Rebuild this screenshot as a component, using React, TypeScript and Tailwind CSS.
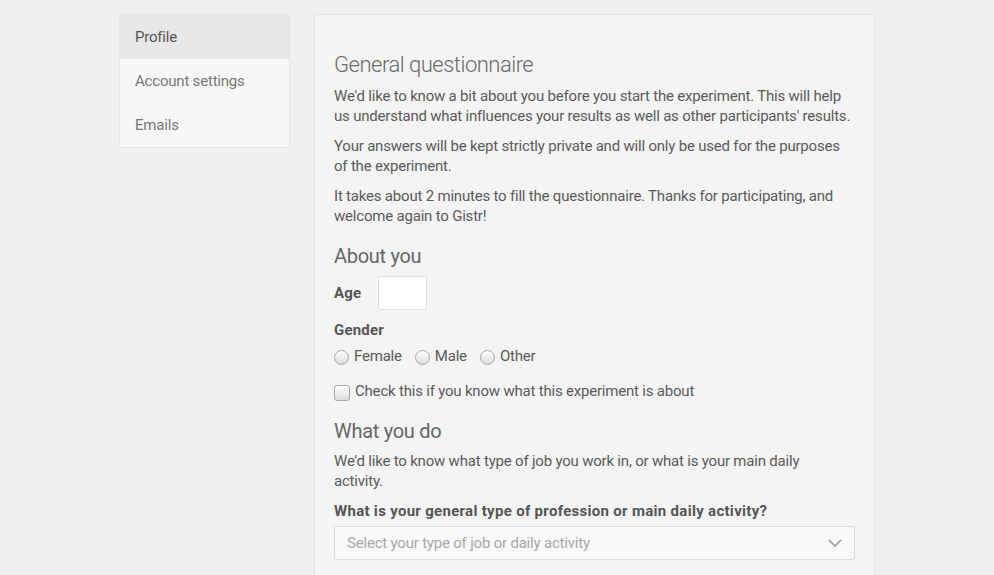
import React, { useState } from 'react';

const Radio = ({ label, checked, onClick }: { label: string; checked: boolean; onClick: () => void }) => (
  <label onClick={onClick} className="flex items-center gap-[5px] cursor-pointer">
    <span className="w-[15px] h-[15px] mt-[3px] rounded-full border border-[#a9a9a9] bg-gradient-to-b from-white to-[#dcdcdc] flex items-center justify-center">
      {checked && <span className="w-[7px] h-[7px] rounded-full bg-[#444]" />}
    </span>
    <span>{label}</span>
  </label>
);

export default function App() {
  const [gender, setGender] = useState('');
  const [knows, setKnows] = useState(false);
  const [age, setAge] = useState('');

  return (
    <div className="min-h-screen bg-[#eff0f2] font-['Roboto',sans-serif] text-[15px] leading-[20px] tracking-[-0.2px] text-[#5b5b5b]">
      <div className="w-[756px] mx-auto pt-[14px] flex items-start gap-[24px]">
        {/* Sidebar */}
        <nav className="w-[171px] shrink-0 bg-[#f7f7f7] border border-[#e4e4e4] rounded-[2px] flex flex-col">
          <a className="h-[44px] px-[15px] flex items-center bg-[#e7e7e7] text-[#555]">Profile</a>
          <a className="h-[44px] px-[15px] flex items-center text-[#777]">Account settings</a>
          <a className="h-[44px] px-[15px] flex items-center text-[#777]">Emails</a>
        </nav>

        {/* Main panel */}
        <main className="w-[561px] bg-[#f4f4f4] border border-[#e4e4e4] rounded-[2px] px-[19px] pt-[37px] pb-[40px]">
          <h1 className="text-[22px] leading-[26px] font-light tracking-[-0.5px] text-[#6a6a6a]">General questionnaire</h1>
          <p className="mt-[8px]">We'd like to know a bit about you before you start the experiment. This will help us understand what influences your results as well as other participants' results.</p>
          <p className="mt-[10px]">Your answers will be kept strictly private and will only be used for the purposes of the experiment.</p>
          <p className="mt-[10px]">It takes about 2 minutes to fill the questionnaire. Thanks for participating, and welcome again to Gistr!</p>

          <h2 className="mt-[17px] text-[20px] leading-[26px] tracking-[-0.3px] text-[#666]">About you</h2>
          <div className="mt-[7px] flex items-center gap-[17px]">
            <span className="font-bold tracking-[0.2px] text-[#555]">Age</span>
            <input
              value={age}
              onChange={e => setAge(e.target.value)}
              className="w-[49px] h-[34px] bg-white border border-[#dcdcdc] rounded-[2px] outline-none px-2"
            />
          </div>
          <div className="mt-[10px] font-bold tracking-[0.2px] text-[#555]">Gender</div>
          <div className="mt-[6px] flex items-center gap-[13px]">
            <Radio label="Female" checked={gender === 'f'} onClick={() => setGender('f')} />
            <Radio label="Male" checked={gender === 'm'} onClick={() => setGender('m')} />
            <Radio label="Other" checked={gender === 'o'} onClick={() => setGender('o')} />
          </div>
          <label onClick={() => setKnows(!knows)} className="mt-[15px] flex items-center gap-[5px] cursor-pointer">
            <span className="w-[16px] h-[16px] mt-[3px] rounded-[3px] border border-[#a9a9a9] bg-gradient-to-b from-white to-[#dcdcdc] flex items-center justify-center text-[11px] leading-none">
              {knows && '✓'}
            </span>
            <span>Check this if you know what this experiment is about</span>
          </label>

          <h2 className="mt-[17px] text-[20px] leading-[26px] tracking-[-0.3px] text-[#666]">What you do</h2>
          <p className="mt-[7px] pr-[10px]">We'd like to know what type of job you work in, or what is your main daily activity.</p>
          <div className="mt-[10px] font-bold tracking-[0.3px] text-[#555]">What is your general type of profession or main daily activity?</div>
          <div className="mt-[5px] h-[34px] bg-[#f9f9fa] border border-[#dcdcdc] rounded-[2px] px-[12px] flex items-center justify-between text-[#a8a8a8]">
            <span>Select your type of job or daily activity</span>
            <svg width="14" height="8" viewBox="0 0 14 8" fill="none" stroke="#9a9a9a" strokeWidth="1.6">
              <path d="M1 1l6 6 6-6" />
            </svg>
          </div>
        </main>
      </div>
    </div>
  );
}
